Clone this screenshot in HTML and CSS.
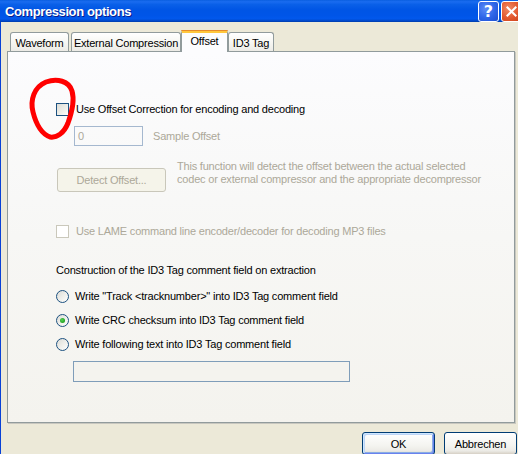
FILE: index.html
```html
<!DOCTYPE html>
<html>
<head>
<meta charset="utf-8">
<link rel="stylesheet" href="styles.css">
</head>
<body>
<div class="window">
  <div class="titlebar">
    <span class="title">Compression options</span>
    <div class="caption-buttons">
      <div class="cap-btn help">?</div>
      <div class="cap-btn close">
        <svg width="21" height="21" viewBox="0 0 21 21"><path d="M6 6 L15 15 M15 6 L6 15" stroke="#fff" stroke-width="2.2" stroke-linecap="square"/></svg>
      </div>
    </div>
  </div>
  <div class="client">
    <div class="tabs">
      <div class="tab t-wave">Waveform</div>
      <div class="tab t-ext">External Compression</div>
      <div class="tab t-off selected">Offset</div>
      <div class="tab t-id3">ID3 Tag</div>
    </div>
    <div class="panel">
      <div class="row row-use">
        <span class="check"></span>
        <span class="lbl">Use Offset Correction for encoding and decoding</span>
      </div>
      <div class="row row-sample">
        <div class="input small-input">0</div>
        <span class="lbl dis">Sample Offset</span>
      </div>
      <div class="row row-detect">
        <div class="btn dis-btn">Detect Offset...</div>
        <div class="desc dis">This function will detect the offset between the actual selected<br>codec or external compressor and the appropriate decompressor</div>
      </div>
      <div class="row row-lame">
        <span class="check dis-check"></span>
        <span class="lbl dis">Use LAME command line encoder/decoder for decoding MP3 files</span>
      </div>
      <div class="heading">Construction of the ID3 Tag comment field on extraction</div>
      <div class="radios">
        <div class="row radio-row"><span class="radio"></span><span class="lbl">Write "Track &lt;tracknumber&gt;" into ID3 Tag comment field</span></div>
        <div class="row radio-row"><span class="radio on"></span><span class="lbl">Write CRC checksum into ID3 Tag comment field</span></div>
        <div class="row radio-row"><span class="radio"></span><span class="lbl">Write following text into ID3 Tag comment field</span></div>
      </div>
      <div class="input wide-input"></div>
    </div>
    <div class="dialog-buttons">
      <div class="btn dlg-btn default">OK</div>
      <div class="btn dlg-btn">Abbrechen</div>
    </div>
  </div>
  <svg class="scribble" width="518" height="454" viewBox="0 0 518 454">
    <path d="M46 82 C57 78 69 81 72 91 C75 101 72 112 68 123 C64 133 57 138 50 137 C42 134 36 124 33 112 C30 100 34 87 46 82" fill="none" stroke="#ff0000" stroke-width="5" stroke-linecap="round" stroke-linejoin="round"/>
  </svg>
</div>
</body>
</html>
```

FILE: styles.css
```css
html, body {
  margin: 0;
  padding: 0;
}
body {
  width: 518px;
  height: 454px;
  overflow: hidden;
  background: #ECE9D8;
  font-family: "Liberation Sans", Arial, sans-serif;
  font-size: 11px;
  letter-spacing: -0.2px;
  color: #000;
}
.window {
  position: relative;
  width: 518px;
  height: 454px;
  border-left: 1px solid #0841d6;
  box-sizing: border-box;
  display: flex;
  flex-direction: column;
}
.titlebar {
  height: 22px;
  display: flex;
  align-items: center;
  justify-content: space-between;
  background: linear-gradient(to bottom, #0a5fe0 0%, #1a6cf0 8%, #0a60e8 20%, #0055e5 45%, #0055e8 70%, #0258ec 85%, #0047c8 95%, #003ca8 100%);
  margin-left: -1px;
}
.title {
  color: #fff;
  font-weight: bold;
  font-size: 13px;
  letter-spacing: -0.4px;
  padding-left: 5px;
  text-shadow: 1px 1px 0 #0a1d8c;
}
.caption-buttons {
  display: flex;
  gap: 2px;
  align-self: flex-start;
  padding-top: 1px;
  margin-right: -4px;
}
.cap-btn {
  width: 19px;
  height: 19px;
  border: 1px solid #fff;
  border-radius: 3px;
  display: flex;
  align-items: center;
  justify-content: center;
  color: #fff;
  letter-spacing: 0;
}
.cap-btn svg { display: block; }
.help {
  background: radial-gradient(circle at 35% 35%, #5b8cf7 0%, #2d64e7 55%, #1d4fd0 100%);
  font-family: "DejaVu Sans", sans-serif;
  font-weight: bold;
  font-size: 16px;
  line-height: 19px;
}
.close {
  background: radial-gradient(circle at 35% 35%, #f08a66 0%, #e2582e 55%, #c9401a 100%);
}
.client {
  padding: 8px 0 0 6px;
  display: flex;
  flex-direction: column;
}
.tabs {
  display: flex;
  align-items: flex-end;
  height: 22px;
  padding-left: 3px;
  position: relative;
  z-index: 2;
  margin-bottom: -1px;
}
.tab {
  height: 19px;
  box-sizing: border-box;
  border: 1px solid #919b9c;
  border-bottom: none;
  border-radius: 3px 3px 0 0;
  background: linear-gradient(to bottom, #ffffff 0%, #f7f7f3 50%, #ecebe6 100%);
  display: flex;
  align-items: center;
  justify-content: center;
  padding-top: 2px;
  margin-bottom: 1px;
  white-space: nowrap;
}
.t-wave { width: 59px; }
.t-ext { width: 110px; margin-left: 2px; }
.t-off { width: 47px; }
.t-id3 { width: 46px; }
.tab.selected {
  height: 22px;
  margin-bottom: 0;
  background: #fcfcfe;
  border-top: 3px solid #ffc73c;
  position: relative;
  align-items: flex-start;
  padding-top: 2px;
}
.tab.selected::before {
  content: "";
  position: absolute;
  left: -1px;
  right: -1px;
  top: -3px;
  height: 1px;
  border-radius: 3px 3px 0 0;
  background: #e68b2c;
}
.panel {
  width: 508px;
  height: 372px;
  box-sizing: border-box;
  border: 1px solid #919b9c;
  box-shadow: 1px 1px 0 #c8c7bf;
  background: linear-gradient(to bottom, #fcfcfe 0%, #f7f7f5 50%, #f4f3ee 100%);
  padding: 0 0 0 48px;
  display: flex;
  flex-direction: column;
  align-items: flex-start;
}
.row {
  display: flex;
  align-items: center;
  white-space: nowrap;
}
.lbl { line-height: 13px; }
.dis { color: #aca899; }
.check {
  width: 13px;
  height: 13px;
  box-sizing: border-box;
  border: 1px solid #1c5180;
  background: linear-gradient(135deg, #dcdcd7 0%, #f0f0ea 60%, #ffffff 100%);
  margin-right: 7px;
  flex: none;
}
.dis-check {
  border-color: #cac8bb;
  background: #ffffff;
}
.row-use { margin-top: 51px; height: 13px; }
.row-sample { margin-top: 10px; margin-left: 18px; }
.input {
  box-sizing: border-box;
  border: 1px solid #a5b8cf;
}
.small-input {
  width: 69px;
  height: 20px;
  color: #aca899;
  padding: 0 0 0 3px;
  line-height: 18px;
  margin-right: 10px;
}
.row-detect {
  margin-top: 13px;
  margin-left: 1px;
  align-items: flex-start;
}
.btn {
  box-sizing: border-box;
  display: flex;
  align-items: center;
  justify-content: center;
  border-radius: 3px;
}
.dis-btn {
  width: 109px;
  height: 24px;
  margin-top: 9px;
  border: 1px solid #c9c7ba;
  background: #f5f4ea;
  color: #aca899;
  margin-right: 11px;
}
.desc {
  line-height: 13px;
  padding-top: 1px;
}
.row-lame { margin-top: 33px; height: 13px; }
.heading {
  margin-top: 26px;
  line-height: 13px;
}
.radios {
  margin-top: 13px;
  display: flex;
  flex-direction: column;
  gap: 11px;
}
.radio-row { height: 13px; }
.radio {
  width: 13px;
  height: 13px;
  box-sizing: border-box;
  border-radius: 50%;
  border: 1px solid #1c5180;
  background: linear-gradient(135deg, #dcdcd7 0%, #f2f2ee 60%, #ffffff 100%);
  margin-right: 6px;
  position: relative;
  flex: none;
}
.radio.on::after {
  content: "";
  position: absolute;
  left: 3px;
  top: 3px;
  width: 5px;
  height: 5px;
  border-radius: 50%;
  background: radial-gradient(circle at 40% 40%, #55d355 0%, #21a121 70%);
}
.wide-input {
  margin-top: 10px;
  margin-left: 17px;
  width: 277px;
  height: 21px;
  border-color: #7f9db9;
  background: #f4f3ee;
}
.dialog-buttons {
  display: flex;
  justify-content: flex-end;
  gap: 9px;
  margin-top: 9px;
  padding-right: 1px;
}
.dlg-btn {
  width: 73px;
  height: 23px;
  border: 1px solid #003c74;
  background: linear-gradient(to bottom, #ffffff 0%, #f4f4f0 60%, #ecebe6 85%, #d6d0c5 100%);
}
.dlg-btn.default {
  box-shadow: inset 1px 1px 0 #cee7ff, inset -1px -1px 0 #6982ee, inset 2px 2px 0 #bcd4f6, inset -2px -2px 0 #89ade4;
}
.scribble {
  position: absolute;
  left: -1px;
  top: 0;
  pointer-events: none;
}
```
